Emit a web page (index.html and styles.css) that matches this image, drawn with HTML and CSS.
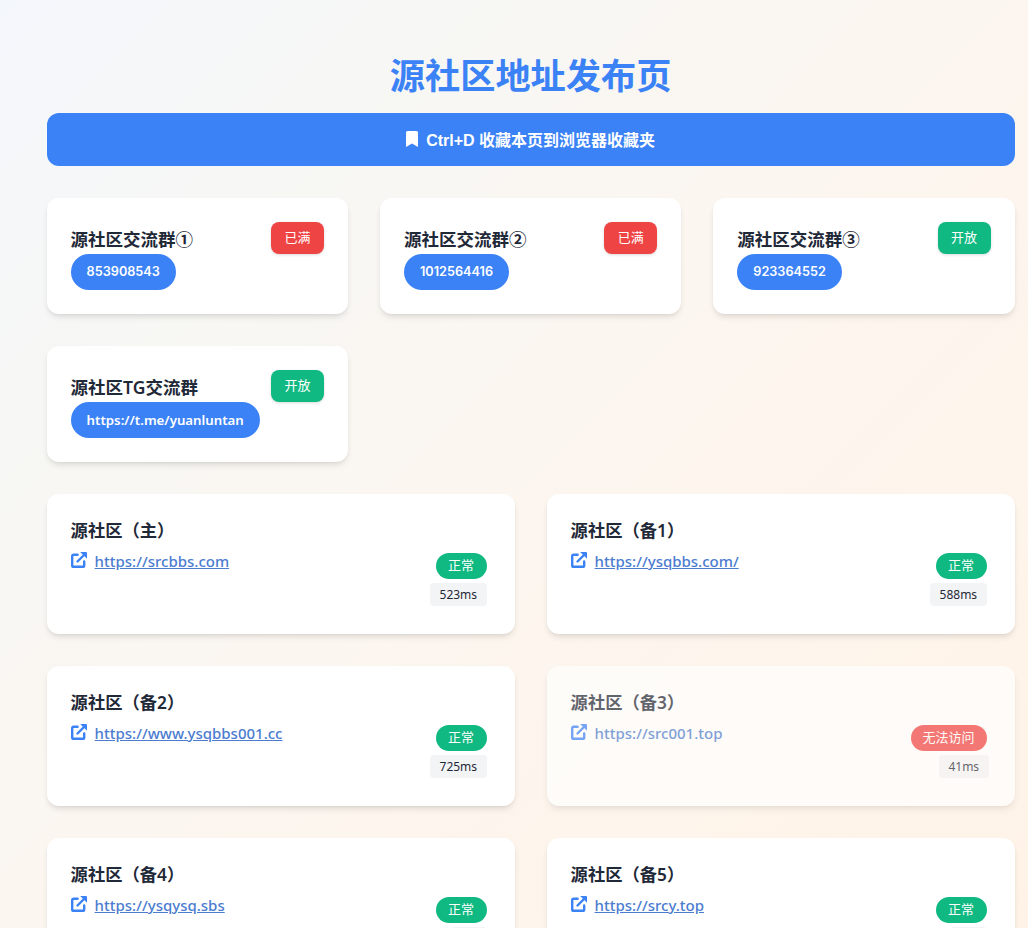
FILE: index.html
```html
<!DOCTYPE html>
<html lang="zh-CN">
<head>
<meta charset="utf-8">
<title>源社区地址发布页</title>
<link rel="stylesheet" href="styles.css">
</head>
<body>
<main class="page">
  <h1 class="title">源社区地址发布页</h1>
  <div class="banner">
    <svg class="banner-icon" viewBox="0 0 12 16"><path d="M0 16V1.5A1.5 1.5 0 0 1 1.5 0h9A1.5 1.5 0 0 1 12 1.5V16L6 12.5z"/></svg>
    <span>Ctrl+D 收藏本页到浏览器收藏夹</span>
  </div>

  <section class="groups">
    <article class="card group">
      <div class="group-head"><h2 class="group-name">源社区交流群①</h2><span class="badge full">已满</span></div>
      <span class="pill">853908543</span>
    </article>
    <article class="card group">
      <div class="group-head"><h2 class="group-name">源社区交流群②</h2><span class="badge full">已满</span></div>
      <span class="pill">1012564416</span>
    </article>
    <article class="card group">
      <div class="group-head"><h2 class="group-name">源社区交流群③</h2><span class="badge open">开放</span></div>
      <span class="pill">923364552</span>
    </article>
    <article class="card group">
      <div class="group-head"><h2 class="group-name">源社区TG交流群</h2><span class="badge open">开放</span></div>
      <span class="pill pill-url">https://t.me/yuanluntan</span>
    </article>
  </section>

  <section class="sites">
    <article class="card site">
      <h2 class="site-name">源社区（主）</h2>
      <div class="site-body">
        <div class="site-link"><svg class="link-icon" viewBox="0 0 16 16"><use href="#ext"/></svg><a href="#">https://srcbbs.com</a></div>
        <div class="status"><span class="state ok">正常</span><span class="latency">523ms</span></div>
      </div>
    </article>
    <article class="card site">
      <h2 class="site-name">源社区（备1）</h2>
      <div class="site-body">
        <div class="site-link"><svg class="link-icon" viewBox="0 0 16 16"><use href="#ext"/></svg><a href="#">https://ysqbbs.com/</a></div>
        <div class="status"><span class="state ok">正常</span><span class="latency">588ms</span></div>
      </div>
    </article>
    <article class="card site">
      <h2 class="site-name">源社区（备2）</h2>
      <div class="site-body">
        <div class="site-link"><svg class="link-icon" viewBox="0 0 16 16"><use href="#ext"/></svg><a href="#">https://www.ysqbbs001.cc</a></div>
        <div class="status"><span class="state ok">正常</span><span class="latency">725ms</span></div>
      </div>
    </article>
    <article class="card site down">
      <h2 class="site-name">源社区（备3）</h2>
      <div class="site-body">
        <div class="site-link"><svg class="link-icon" viewBox="0 0 16 16"><use href="#ext"/></svg><a class="plain" href="#">https://src001.top</a></div>
        <div class="status"><span class="state bad">无法访问</span><span class="latency">41ms</span></div>
      </div>
    </article>
    <article class="card site">
      <h2 class="site-name">源社区（备4）</h2>
      <div class="site-body">
        <div class="site-link"><svg class="link-icon" viewBox="0 0 16 16"><use href="#ext"/></svg><a href="#">https://ysqysq.sbs</a></div>
        <div class="status"><span class="state ok">正常</span><span class="latency">ms</span></div>
      </div>
    </article>
    <article class="card site">
      <h2 class="site-name">源社区（备5）</h2>
      <div class="site-body">
        <div class="site-link"><svg class="link-icon" viewBox="0 0 16 16"><use href="#ext"/></svg><a href="#">https://srcy.top</a></div>
        <div class="status"><span class="state ok">正常</span><span class="latency">ms</span></div>
      </div>
    </article>
  </section>
</main>
<svg class="defs" width="0" height="0">
  <symbol id="ext" viewBox="0 0 16 16">
    <path d="M6.6 2.8H2.6A1.4 1.4 0 0 0 1.2 4.2v9.2a1.4 1.4 0 0 0 1.4 1.4h9.2a1.4 1.4 0 0 0 1.4-1.4V9.4" fill="none" stroke="currentColor" stroke-width="2.4" stroke-linecap="round"/>
    <path d="M6.5 9.5 13.5 2.5" fill="none" stroke="currentColor" stroke-width="2.4" stroke-linecap="round"/>
    <path d="M9.2 0H15a1 1 0 0 1 1 1v5.8z" fill="currentColor"/>
  </symbol>
</svg>
</body>
</html>
```
FILE: styles.css
```css
* { box-sizing: border-box; }
html, body { margin: 0; height: 100%; }
body {
  height: 100vh;
  overflow: hidden;
  background: linear-gradient(135deg, #f4f7fc 0%, #f7f7f4 25%, #fcf6f0 50%, #fff3e7 100%);
  font-family: "Noto Sans", "Noto Sans CJK SC", sans-serif;
  color: #1f2937;
}
.page { padding: 53px 13.4px 32px 46.6px; }
.title {
  margin: 0 0 12px;
  text-align: center;
  font-family: "Liberation Sans", "Noto Sans CJK SC", sans-serif;
  font-size: 35.2px;
  line-height: 48px;
  font-weight: 700;
  color: #3b82f6;
}
.banner {
  display: flex;
  align-items: center;
  justify-content: center;
  gap: 8px;
  height: 53px;
  margin-bottom: 32px;
  padding-bottom: 1px;
  border-radius: 12px;
  background: #3b82f6;
  color: #fff;
  font-family: "Liberation Sans", "Noto Sans CJK SC", sans-serif;
  font-size: 16px;
  font-weight: 700;
}
.banner-icon { width: 12px; height: 16px; fill: #fff; }
.card {
  background: #fff;
  border-radius: 12px;
  box-shadow: 0 4px 6px -1px rgba(0,0,0,.1), 0 2px 4px -2px rgba(0,0,0,.08);
}
.groups {
  display: grid;
  grid-template-columns: repeat(3, 1fr);
  gap: 32px;
  margin-bottom: 32px;
}
.group { padding: 24px; display: flex; flex-direction: column; align-items: flex-start; }
.group-head { width: 100%; display: flex; justify-content: space-between; align-items: center; height: 32px; }
.group-name { margin: 1px 0 0; font-size: 17.5px; line-height: 30px; font-weight: 600; color: #1f2937; }
.badge {
  padding: 0 13.5px;
  height: 32px;
  line-height: 31px;
  border-radius: 8px;
  color: #fff;
  font-size: 13px;
  box-shadow: 0 1px 3px rgba(0,0,0,.15);
}
.full { background: #ef4444; }
.open { background: #10b981; }
.pill {
  height: 36px;
  line-height: 36px;
  padding: 0 16px;
  border-radius: 18px;
  background: #3b82f6;
  color: #fff;
  font-family: Inter, "Noto Sans", sans-serif;
  font-size: 12.7px;
  font-weight: 600;
}
.pill-url { font-family: "Noto Sans", sans-serif; font-size: 13.25px; }
.sites {
  display: grid;
  grid-template-columns: repeat(2, 1fr);
  gap: 32px;
}
.site { padding: 24px; height: 140px; }
.site-name { margin: 0; font-size: 17.3px; line-height: 25px; height: 26px; font-weight: 600; color: #1f2937; }
.site-body { display: flex; justify-content: space-between; align-items: flex-start; margin-top: 4px; }
.site-link { display: flex; align-items: center; gap: 8px; height: 26px; }
.site-link a { color: #4b7ccf; font-size: 15px; font-weight: 500; text-decoration: underline; }
.site-link a.plain { text-decoration: none; }
.link-icon { width: 16px; height: 16px; margin-top: -3px; color: #3b82f6; }
.status { display: flex; flex-direction: column; align-items: flex-end; gap: 4px; margin: 5px 4px 0 0; }
.state {
  height: 26px;
  line-height: 25px;
  padding: 0 12.5px;
  border-radius: 13px;
  color: #fff;
  font-size: 13px;
}
.ok { background: #10b981; }
.bad { background: #ef4444; padding: 0 12px; }
.latency {
  height: 23px;
  line-height: 24px;
  padding: 0 9.5px;
  border-radius: 4px;
  background: #f3f4f6;
  color: #1f2937;
  font-size: 12px;
}
.down { opacity: .7; }
.down .latency { margin-right: -2px; }
.defs { position: absolute; }
```
